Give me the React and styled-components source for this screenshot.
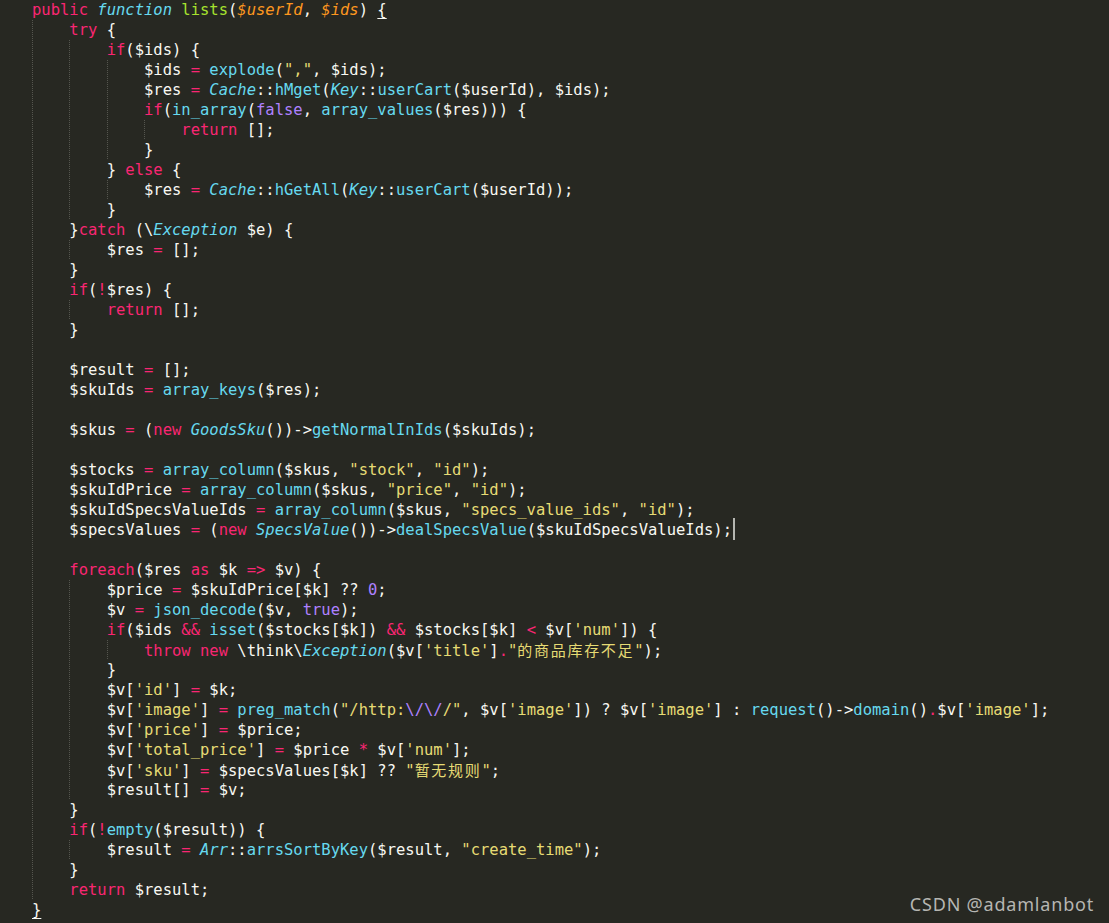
import React from "react";
import styled, { createGlobalStyle } from "styled-components";

const GlobalStyle = createGlobalStyle`
  html, body {
    margin: 0;
    padding: 0;
    background: #272822;
  }
`;

const colors = {
  t: "#f8f8f2",
  k: "#f92672",
  o: "#f92672",
  i: "#66d9ef",
  c: "#66d9ef",
  g: "#a6e22e",
  p: "#fd971f",
  s: "#e6db74",
  z: "#e6db74",
  n: "#ae81ff",
  u: "#f8f8f2",
};

const Screen = styled.div`
  position: relative;
  width: 1109px;
  height: 923px;
  overflow: hidden;
  background: #272822;
`;

const Editor = styled.div`
  padding-left: 32px;
  font-family: "DejaVu Sans Mono", "Liberation Mono", monospace;
  font-size: 15.5px;
  color: #f8f8f2;
`;

const Row = styled.div`
  height: 20px;
  line-height: 20px;
  white-space: pre;
`;

const Indent = styled.span`
  display: inline-block;
  height: 20px;
  vertical-align: top;
  background: repeating-linear-gradient(
      to bottom,
      #55564f 0 1px,
      transparent 1px 2px
    )
    left top / 1px 100% no-repeat;
`;

const Tok = styled.span`
  color: ${(p) => colors[p.$kind] || colors.t};
  font-style: ${(p) => (p.$kind === "i" || p.$kind === "p" ? "italic" : "normal")};
  ${(p) =>
    p.$kind === "u" &&
    `
    text-decoration: underline;
    text-underline-offset: 3px;
  `}
  ${(p) =>
    p.$kind === "z" &&
    `
    font-family: "Noto Sans CJK SC", sans-serif;
    font-size: 15px;
    letter-spacing: 1.7px;
    line-height: 20px;
  `}
`;

const Caret = styled.span`
  display: inline-block;
  width: 2px;
  height: 22px;
  margin-left: 1px;
  vertical-align: top;
  margin-top: -2px;
  background: rgba(230, 230, 225, 0.75);
`;

const Watermark = styled.div`
  position: absolute;
  right: 15px;
  bottom: 7px;
  font-family: "Noto Sans", "Open Sans", sans-serif;
  font-size: 18px;
  letter-spacing: 0.8px;
  line-height: 24px;
  color: #b6b6b2;
`;

const lines = [
  [0, "«k:public» «i:function» «g:lists»(«p:$userId», «p:$ids») «u:{»"],
  [1, "«k:try» {"],
  [2, "«k:if»($ids) {"],
  [3, "$ids «o:=» «c:explode»(«s:\",\"», $ids);"],
  [3, "$res «o:=» «i:Cache»::«c:hMget»(«i:Key»::«c:userCart»($userId), $ids);"],
  [3, "«k:if»(«c:in_array»(«n:false», «c:array_values»($res))) {"],
  [4, "«k:return» [];"],
  [3, "}"],
  [2, "} «k:else» {"],
  [3, "$res «o:=» «i:Cache»::«c:hGetAll»(«i:Key»::«c:userCart»($userId));"],
  [2, "}"],
  [1, "}«k:catch» (\\«i:Exception» $e) {"],
  [2, "$res «o:=» [];"],
  [1, "}"],
  [1, "«k:if»(«o:!»$res) {"],
  [2, "«k:return» [];"],
  [1, "}"],
  [1, ""],
  [1, "$result «o:=» [];"],
  [1, "$skuIds «o:=» «c:array_keys»($res);"],
  [1, ""],
  [1, "$skus «o:=» («k:new» «i:GoodsSku»())->«c:getNormalInIds»($skuIds);"],
  [1, ""],
  [1, "$stocks «o:=» «c:array_column»($skus, «s:\"stock\"», «s:\"id\"»);"],
  [1, "$skuIdPrice «o:=» «c:array_column»($skus, «s:\"price\"», «s:\"id\"»);"],
  [1, "$skuIdSpecsValueIds «o:=» «c:array_column»($skus, «s:\"specs_value_ids\"», «s:\"id\"»);"],
  [1, "$specsValues «o:=» («k:new» «i:SpecsValue»())->«c:dealSpecsValue»($skuIdSpecsValueIds);«x:»"],
  [1, ""],
  [1, "«k:foreach»($res «k:as» $k «o:=>» $v) {"],
  [2, "$price «o:=» $skuIdPrice[$k] ?? «n:0»;"],
  [2, "$v «o:=» «c:json_decode»($v, «n:true»);"],
  [2, "«k:if»($ids «o:&&» «c:isset»($stocks[$k]) «o:&&» $stocks[$k] «o:<» $v[«s:'num'»]) {"],
  [3, "«k:throw» «k:new» \\think\\«i:Exception»($v[«s:'title'»]«o:.»«s:\"»«z:的商品库存不足»«s:\"»);"],
  [2, "}"],
  [2, "$v[«s:'id'»] «o:=» $k;"],
  [2, "$v[«s:'image'»] «o:=» «c:preg_match»(«s:\"/http:»«n:\\/\\/»«s:/\"», $v[«s:'image'»]) ? $v[«s:'image'»] : «c:request»()->«c:domain»()«o:.»$v[«s:'image'»];"],
  [2, "$v[«s:'price'»] «o:=» $price;"],
  [2, "$v[«s:'total_price'»] «o:=» $price «o:*» $v[«s:'num'»];"],
  [2, "$v[«s:'sku'»] «o:=» $specsValues[$k] ?? «s:\"»«z:暂无规则»«s:\"»;"],
  [2, "$result[] «o:=» $v;"],
  [1, "}"],
  [1, "«k:if»(«o:!»«c:empty»($result)) {"],
  [2, "$result «o:=» «i:Arr»::«c:arrsSortByKey»($result, «s:\"create_time\"»);"],
  [1, "}"],
  [1, "«k:return» $result;"],
  [0, "«u:}»"],
];

// split "«k:text»" markers into [kind, text] tokens
const parse = (src) => {
  const out = [];
  const re = /«(\w):([^»]*)»/g;
  let last = 0;
  let m;
  while ((m = re.exec(src))) {
    if (m.index > last) out.push(["t", src.slice(last, m.index)]);
    out.push([m[1], m[2]]);
    last = re.lastIndex;
  }
  if (last < src.length) out.push(["t", src.slice(last)]);
  return out;
};

const CodeLine = ({ indent, src }) => (
  <Row>
    {Array.from({ length: indent }, (_, i) => (
      <Indent key={"i" + i}>{"    "}</Indent>
    ))}
    {parse(src).map(([kind, text], j) =>
      kind === "x" ? (
        <Caret key={j} />
      ) : (
        <Tok key={j} $kind={kind}>
          {text}
        </Tok>
      )
    )}
  </Row>
);

export default function App() {
  return (
    <Screen>
      <GlobalStyle />
      <Editor>
        {lines.map(([indent, src], n) => (
          <CodeLine key={n} indent={indent} src={src} />
        ))}
      </Editor>
      <Watermark>CSDN @adamlanbot</Watermark>
    </Screen>
  );
}
